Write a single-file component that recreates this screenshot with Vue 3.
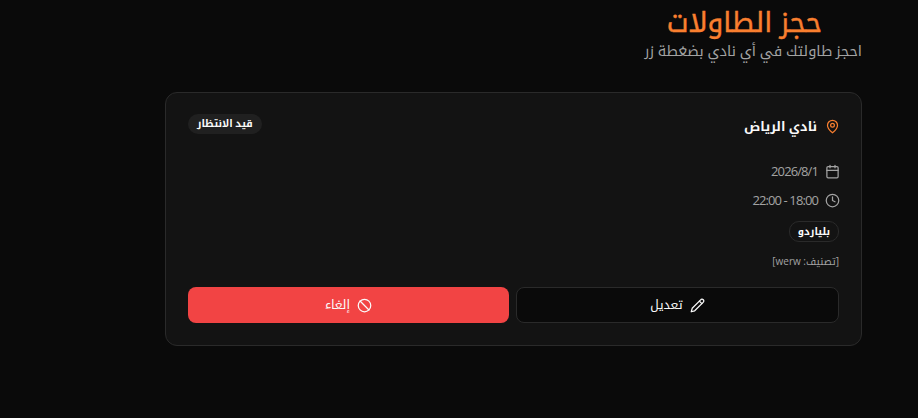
<template>
  <main class="page" dir="rtl">
    <header class="head">
      <h1 class="title">حجز الطاولات</h1>
      <p class="sub">احجز طاولتك في أي نادي بضغطة زر</p>
    </header>
    <section class="card">
      <div class="top">
        <div class="club">
          <svg class="ico pin" viewBox="0 0 24 24"><path d="M20 10c0 6-8 12-8 12s-8-6-8-12a8 8 0 0 1 16 0Z"/><circle cx="12" cy="10" r="3"/></svg>
          <span>نادي الرياض</span>
        </div>
        <span class="status">قيد الانتظار</span>
      </div>
      <div class="row first">
        <svg class="ico" viewBox="0 0 24 24"><rect x="3" y="4" width="18" height="18" rx="2"/><path d="M16 2v4M8 2v4M3 10h18"/></svg>
        <span>2026/8/1</span>
      </div>
      <div class="row">
        <svg class="ico" viewBox="0 0 24 24"><circle cx="12" cy="12" r="10"/><path d="M12 6v6l4 2"/></svg>
        <span>18:00 - 22:00</span>
      </div>
      <span class="tag">بلياردو</span>
      <p class="note">[تصنيف: werw]</p>
      <div class="actions">
        <button class="btn edit">
          <svg class="ico" viewBox="0 0 24 24"><path d="M17 3a2.85 2.85 0 1 1 4 4L7.5 20.5 2 22l1.5-5.5Z"/><path d="m15 5 4 4"/></svg>
          <span>تعديل</span>
        </button>
        <button class="btn cancel">
          <svg class="ico" viewBox="0 0 24 24"><circle cx="12" cy="12" r="10"/><path d="m4.9 4.9 14.2 14.2"/></svg>
          <span>إلغاء</span>
        </button>
      </div>
    </section>
  </main>
</template>

<script setup>
</script>

<style>
html, body { margin: 0; background: #0a0a0a; }
</style>

<style scoped>
.page {
  box-sizing: border-box;
  width: 918px;
  height: 418px;
  padding: 0 56px;
  background: #0a0a0a;
  font-family: "Open Sans", "Noto Kufi Arabic", "Noto Sans Arabic", "DejaVu Sans", sans-serif;
  overflow: hidden;
}
.head { height: 92px; }
.title {
  margin: 0;
  padding: 4px 40px 0 0;
  font-size: 28px;
  line-height: 34px;
  font-weight: 400;
  -webkit-text-stroke: 0.4px #f97f2f;
  color: #f97f2f;
}
.sub {
  margin: 0;
  font-size: 14.5px;
  line-height: 26px;
  color: #a3a3a3;
}
.card {
  box-sizing: border-box;
  width: 697px;
  height: 254px;
  margin-left: auto;
  padding: 21px 22px 22px;
  background: #131313;
  border: 1px solid #2a2a2a;
  border-radius: 12px;
  display: flex;
  flex-direction: column;
  align-items: flex-start;
}
.top {
  width: 100%;
  display: flex;
  justify-content: space-between;
  align-items: flex-start;
}
.club {
  display: flex;
  align-items: center;
  gap: 7.5px;
  margin-top: 2px;
  margin-right: -0.5px;
  font-size: 12.8px;
  line-height: 20px;
  font-weight: 700;
  color: #fafafa;
}
.status {
  padding: 0 9px;
  height: 20px;
  line-height: 18px;
  border-radius: 10px;
  background: #202020;
  font-size: 10px;
  font-weight: 700;
  color: #fafafa;
}
.ico {
  width: 15px;
  height: 15px;
  fill: none;
  stroke: currentColor;
  stroke-width: 2;
  stroke-linecap: round;
  stroke-linejoin: round;
  flex: none;
}
.pin { color: #f97f2f; }
.row {
  display: flex;
  align-items: center;
  gap: 6.5px;
  height: 20px;
  margin-bottom: 9px;
  margin-right: -0.5px;
  font-size: 13px;
  letter-spacing: -0.9px;
  color: #a3a3a3;
}
.first { margin-top: 25px; }
.tag {
  margin-top: 2px;
  padding: 0 8px;
  height: 19px;
  line-height: 18px;
  border: 1px solid #2a2a2a;
  border-radius: 10px;
  font-size: 10px;
  font-weight: 700;
  color: #fafafa;
}
.note {
  margin: 12px 0 0;
  font-size: 10px;
  line-height: 14px;
  color: #a3a3a3;
}
.actions {
  width: 100%;
  display: flex;
  gap: 7px;
  margin-top: auto;
}
.btn {
  box-sizing: border-box;
  flex: 1;
  height: 36px;
  display: flex;
  align-items: center;
  justify-content: center;
  gap: 7px;
  border-radius: 8px;
  font-family: inherit;
  font-size: 12.5px;
  font-weight: 400;
  color: #fafafa;
}
.edit { background: #0a0a0a; border: 1px solid #2a2a2a; }
.cancel { background: #f24444; border: 0; }
</style>
